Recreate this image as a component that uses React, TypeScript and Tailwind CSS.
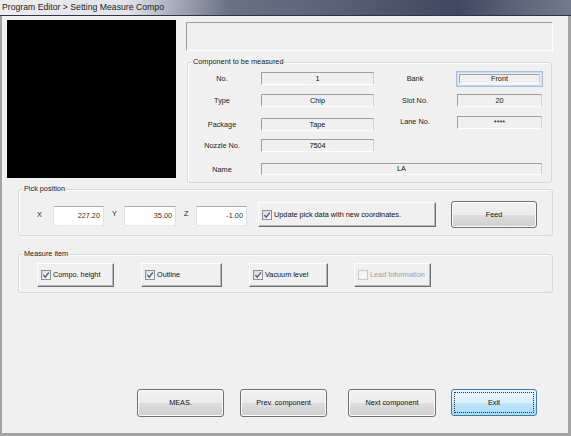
import React from "react";

const font = "font-['Liberation_Sans',Arial,sans-serif]";
const small = "text-[7.3px]";

function GroupBox({
  label,
  className,
  children,
}: {
  label: string;
  className?: string;
  children: React.ReactNode;
}) {
  return (
    <div
      className={`relative border border-[#d5d9dc] rounded-[3px] shadow-[inset_1px_1px_0_#ffffff] ${className ?? ""}`}
    >
      <span className={`absolute -top-[6px] left-[4px] bg-[#f0f0f0] px-[1px] ${small} leading-[10px] text-[#222] whitespace-nowrap`}>
        {label}
      </span>
      {children}
    </div>
  );
}

function Field({ value, className }: { value: string; className?: string }) {
  return (
    <div
      className={`flex items-center justify-center border-t border-l border-t-[#a0a0a0] border-l-[#a0a0a0] border-r border-b border-r-[#d0d0d0] border-b-white ${small} leading-none text-[#111] ${className ?? ""}`}
    >
      {value}
    </div>
  );
}

function Label({ text, className }: { text: string; className?: string }) {
  return (
    <div className={`text-center ${small} leading-none text-[#222] whitespace-nowrap ${className ?? ""}`}>
      {text}
    </div>
  );
}

function Check({ checked, disabled }: { checked: boolean; disabled?: boolean }) {
  return (
    <svg width="10" height="10" viewBox="0 0 10 10" className="shrink-0">
      <defs>
        <linearGradient id="cbg" x1="0" y1="0" x2="1" y2="1">
          <stop offset="0" stopColor="#d8d8d8" />
          <stop offset="1" stopColor="#fbfbfb" />
        </linearGradient>
      </defs>
      <rect
        x="0.5"
        y="0.5"
        width="9"
        height="9"
        fill={disabled ? "#f4f4f4" : "url(#cbg)"}
        stroke={disabled ? "#c8c8c8" : "#8e8f8f"}
      />
      {checked && (
        <path
          d="M2.3 5 L4.2 7.2 L7.8 2.5"
          fill="none"
          stroke="#4f6190"
          strokeWidth="1.3"
        />
      )}
    </svg>
  );
}

function CheckButton({
  text,
  checked,
  disabled,
  className,
}: {
  text: string;
  checked: boolean;
  disabled?: boolean;
  className?: string;
}) {
  return (
    <div
      className={`flex items-center gap-[2px] pl-[3px] border border-t-white border-l-white border-r-[#6f6f6f] border-b-[#6f6f6f] shadow-[inset_-1px_-1px_0_#b8b8b8] bg-[#f0f0f0] ${small} leading-none whitespace-nowrap ${disabled ? "text-[#a0a0a0]" : "text-[#111]"} ${className ?? ""}`}
    >
      <Check checked={checked} disabled={disabled} />
      <span>{text}</span>
    </div>
  );
}

function Button({
  text,
  focused,
  className,
}: {
  text: string;
  focused?: boolean;
  className?: string;
}) {
  if (focused) {
    return (
      <div
        className={`flex items-center justify-center rounded-[3px] border border-[#3c7fb1] bg-[linear-gradient(180deg,#eaf6fd_0%,#d9f0fc_50%,#bee6fd_51%,#a7d9f5_100%)] p-[2px] ${className ?? ""}`}
      >
        <div className={`flex h-full w-full items-center justify-center border border-dotted border-[#333] ${small} leading-none text-[#111]`}>
          {text}
        </div>
      </div>
    );
  }
  return (
    <div
      className={`flex items-center justify-center rounded-[3px] border border-[#707070] shadow-[inset_0_0_0_1px_#fcfcfc] bg-[linear-gradient(180deg,#f2f2f2_0%,#ebebeb_50%,#dddddd_51%,#cfcfcf_100%)] ${small} leading-none text-[#111] whitespace-nowrap ${className ?? ""}`}
    >
      {text}
    </div>
  );
}

function NumInput({ value, className }: { value: string; className?: string }) {
  return (
    <div
      className={`flex items-center justify-end pr-[3px] bg-white border border-t-[#abadb3] border-l-[#e2e3ea] border-r-[#dbdfe6] border-b-[#e3e9ef] ${small} leading-none text-[#3a2e1e] ${className ?? ""}`}
    >
      {value}
    </div>
  );
}

export default function App() {
  return (
    <div className={`w-[571px] h-[436px] flex flex-col overflow-hidden ${font}`}>
      {/* title bar */}
      <div className="h-[16px] shrink-0 flex items-center bg-[linear-gradient(90deg,#ecedf0_0%,#e2e4e9_22%,#a3a9b7_31%,#6a7186_40%,#5a6179_58%,#3f4762_80%,#5b627a_90%,#737a8d_100%)] border-b border-[#2e3447]">
        <span className="pl-[2px] text-[8.7px] leading-none text-[#1a1a1a] whitespace-nowrap">
          Program Editor &gt; Setting Measure Compo
        </span>
      </div>

      {/* client area */}
      <div className="flex-1 flex flex-col bg-[#f0f0f0] border-l-2 border-r-[3px] border-b-[3px] border-[#a3a3a3]">
        <div className="flex pt-[4px] pl-[5px]">
          <div className="w-[169px] h-[158px] bg-black shrink-0" />
          <div className="ml-[10px] flex flex-col">
            <div className="mt-[2px] w-[367px] h-[29px] border-t border-l border-t-[#a0a0a0] border-l-[#a0a0a0] border-r border-b border-r-white border-b-white" />
            <GroupBox label="Component to be measured" className="mt-[11px] ml-[1px] w-[365px] h-[121px]">
              <div className="flex flex-col pt-[9px]">
                <div className="flex items-center h-[13px]">
                  <Label text="No." className="w-[68px]" />
                  <Field value="1" className="ml-[5px] w-[113px] h-[13px]" />
                  <Label text="Bank" className="w-[82px]" />
                  <div className="w-[87px] h-[16px] border border-[#a4c1e6] shadow-[inset_0_0_0_1px_#c9dbf3]">
                    <Field value="Front" className="m-[2px] h-[10px] border-t-[#8a8a8a] border-l-[#8a8a8a]" />
                  </div>
                </div>
                <div className="flex items-center h-[13px] mt-[9px]">
                  <Label text="Type" className="w-[68px]" />
                  <Field value="Chip" className="ml-[5px] w-[113px] h-[13px]" />
                  <Label text="Slot No." className="w-[82px]" />
                  <Field value="20" className="ml-[1px] w-[85px] h-[13px]" />
                </div>
                <div className="flex items-center h-[13px] mt-[11px]">
                  <Label text="Package" className="w-[68px]" />
                  <Field value="Tape" className="ml-[5px] w-[113px] h-[13px]" />
                  <Label text="Lane No." className="w-[82px] mb-[6px]" />
                  <Field value="****" className="ml-[1px] w-[85px] h-[13px] mb-[4px]" />
                </div>
                <div className="flex items-center h-[13px] mt-[8px]">
                  <Label text="Nozzle No." className="w-[68px]" />
                  <Field value="7504" className="ml-[5px] w-[113px] h-[13px]" />
                </div>
                <div className="flex items-center h-[13px] mt-[10px]">
                  <Label text="Name" className="w-[68px] mt-[2px]" />
                  <Field value="LA" className="ml-[5px] w-[281px] h-[12px]" />
                </div>
              </div>
            </GroupBox>
          </div>
        </div>

        <GroupBox label="Pick position" className="mt-[6px] ml-[16px] w-[535px] h-[47px]">
          <div className="flex items-start pt-[11px]">
            <Label text="X" className="w-[34px] pl-[18px] text-left mt-[10px]" />
            <NumInput value="227.20" className="w-[51px] h-[20px] mt-[5px]" />
            <Label text="Y" className="w-[20px] pl-[8px] text-left mt-[9px]" />
            <NumInput value="35.00" className="w-[52px] h-[20px] mt-[5px]" />
            <Label text="Z" className="w-[20px] pl-[8px] text-left mt-[9px]" />
            <NumInput value="-1.00" className="w-[51px] h-[20px] mt-[5px]" />
            <CheckButton
              text="Update pick data with new coordinates."
              checked
              className="ml-[11px] mt-[1px] w-[178px] h-[25px]"
            />
            <Button text="Feed" className="ml-[15px] w-[86px] h-[27px]" />
          </div>
        </GroupBox>

        <GroupBox label="Measure item" className="mt-[18px] ml-[16px] w-[535px] h-[39px]">
          <div className="flex pt-[8px] pl-[18px]">
            <CheckButton text="Compo. height" checked className="w-[77px] h-[24px]" />
            <CheckButton text="Outline" checked className="ml-[27px] w-[81px] h-[24px]" />
            <CheckButton text="Vacuum level" checked className="ml-[27px] w-[79px] h-[24px]" />
            <CheckButton text="Lead Information" checked={false} disabled className="ml-[26px] w-[77px] h-[24px]" />
          </div>
        </GroupBox>

        <div className="flex items-start mt-[96px]">
          <Button text="MEAS." className="ml-[135px] w-[87px] h-[28px]" />
          <Button text="Prev. component" className="ml-[16px] w-[87px] h-[28px]" />
          <Button text="Next component" className="ml-[21px] w-[88px] h-[28px]" />
          <Button text="Exit" focused className="ml-[15px] w-[86px] h-[27px]" />
        </div>
      </div>
    </div>
  );
}
